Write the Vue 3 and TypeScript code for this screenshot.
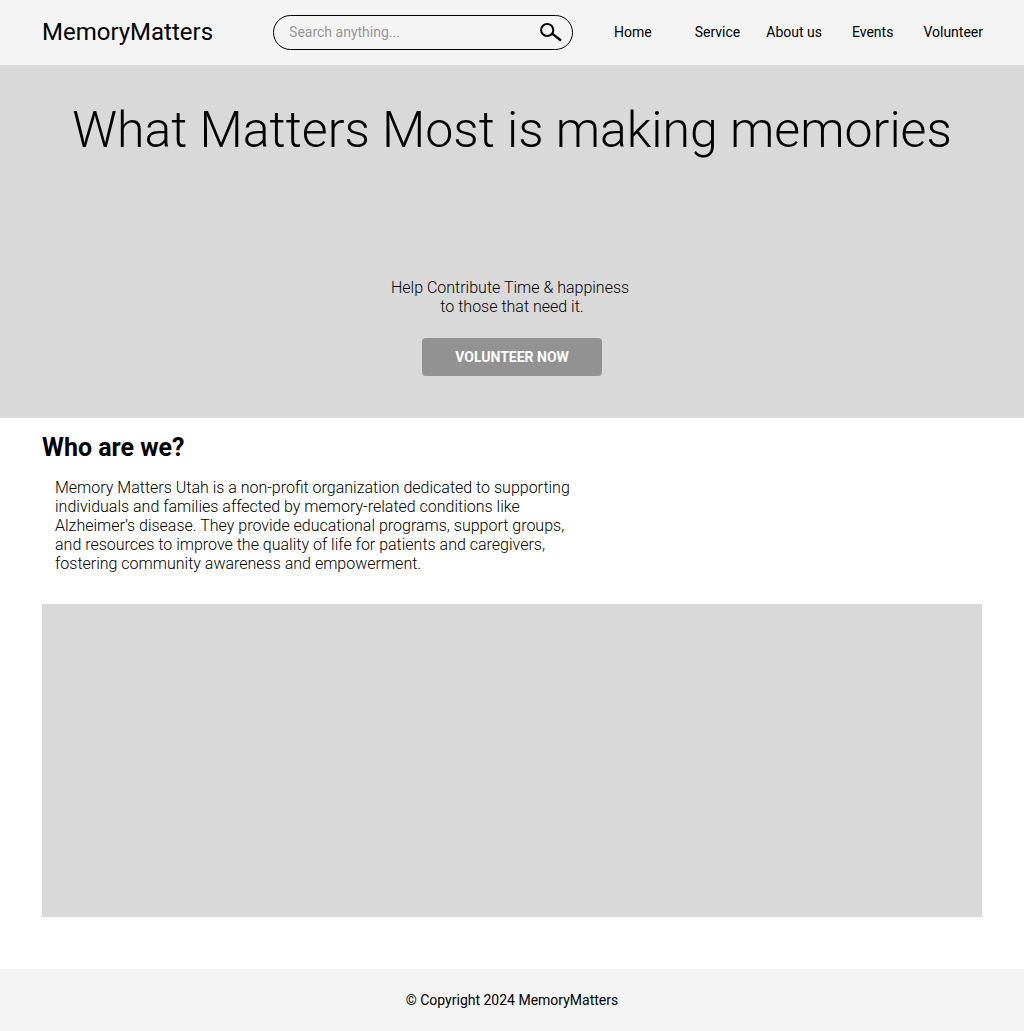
<script setup lang="ts">
import { ref } from 'vue'

interface NavItem {
  label: string
  slot: string
}

const query = ref<string>('')
const navItems: NavItem[] = [
  { label: 'Home', slot: 'home' },
  { label: 'Service', slot: 'service' },
  { label: 'About us', slot: 'about' },
  { label: 'Events', slot: 'events' },
  { label: 'Volunteer', slot: 'volunteer' },
]
</script>

<template>
  <div class="page">
    <header class="topbar">
      <a class="brand" href="#">MemoryMatters</a>
      <form class="search" role="search" @submit.prevent>
        <input v-model="query" type="search" aria-label="Search" placeholder="Search anything..." />
        <button type="submit" aria-label="Submit search">
          <svg viewBox="0 0 22 20" width="22" height="20" fill="none" stroke="#000" stroke-width="2">
            <circle cx="7.2" cy="8" r="6.1" />
            <path d="M11.6 11.6L13.2 12.4L21 18.5" stroke-width="2.3" />
          </svg>
        </button>
      </form>
      <nav class="nav" aria-label="Main">
        <a v-for="item in navItems" :key="item.slot" :class="item.slot" href="#">{{ item.label }}</a>
      </nav>
    </header>

    <main>
      <section class="hero">
        <h1>What Matters Most is making memories</h1>
        <div class="call">
          <p>Help Contribute Time &amp; happiness&nbsp;<br />to those that need it.</p>
          <button type="button" class="cta">VOLUNTEER NOW</button>
        </div>
      </section>

      <section class="about-section">
        <h2>Who are we?</h2>
        <p>
          Memory Matters Utah is a non-profit organization dedicated to supporting individuals and
          families affected by memory-related conditions like Alzheimer’s disease. They provide
          educational programs, support groups, and resources to improve the quality of life for
          patients and caregivers, fostering community awareness and empowerment.
        </p>
        <div class="banner"></div>
      </section>
    </main>

    <footer>© Copyright 2024 MemoryMatters</footer>
  </div>
</template>

<style>
body {
  margin: 0;
  background: #fff;
}
</style>

<style scoped>
.page {
  min-height: 100vh;
  display: flex;
  flex-direction: column;
  color: #000;
  font-family: Roboto, sans-serif;
  font-size: 16px;
  line-height: 19px;
}

.page *,
.page {
  box-sizing: border-box;
}

main {
  flex: 1;
}

.topbar {
  display: flex;
  align-items: center;
  height: 65px;
  padding: 0 41px 1px 42px;
  background: #f4f4f4;
}

.brand {
  font-size: 24px;
  line-height: 28px;
  color: inherit;
  text-decoration: none;
}

.search {
  display: flex;
  align-items: center;
  width: 300px;
  height: 35px;
  margin-left: 60px;
  padding: 0 10px 0 15px;
  border: 1px solid #000;
  border-radius: 18px;
}

.search input {
  flex: 1;
  min-width: 0;
  padding: 0;
  border: 0;
  outline: 0;
  background: none;
  appearance: none;
  font: 14px/16px Roboto, sans-serif;
}

.search input::placeholder {
  color: #979797;
  opacity: 1;
}

.search button {
  display: flex;
  padding: 0;
  border: 0;
  background: none;
}

.nav {
  display: flex;
  margin-left: auto;
  font-size: 14px;
  line-height: 16px;
}

.nav a {
  color: inherit;
  text-decoration: none;
  white-space: nowrap;
}

.nav .service {
  margin-left: 43px;
}

.nav .about {
  margin-left: 26px;
}

.nav .events,
.nav .volunteer {
  margin-left: 30px;
}

.hero {
  display: flex;
  flex-direction: column;
  align-items: center;
  justify-content: space-between;
  min-height: 353px;
  padding: 36px 42px 42px;
  background: #d9d9d9;
  text-align: center;
}

h1 {
  margin: 0;
  font-size: 50px;
  line-height: 59px;
  font-weight: 300;
}

.call {
  display: flex;
  flex-direction: column;
  align-items: center;
  gap: 22px;
}

p {
  margin: 0;
  font-weight: 300;
}

.cta {
  width: 180px;
  height: 38px;
  border: 0;
  border-radius: 4px;
  background: #929292;
  color: #fff;
  font: 700 14px/16px Roboto, sans-serif;
}

.about-section {
  padding: 15px 42px 52px;
}

h2 {
  margin: 0;
  font-size: 25px;
  line-height: 29px;
  font-weight: 700;
}

.about-section p {
  max-width: 533px;
  margin-top: 16px;
  padding-left: 13px;
}

.banner {
  height: 313px;
  margin-top: 31px;
  background: #d9d9d9;
}

footer {
  padding: 23px 42px;
  background: #f4f4f4;
  text-align: center;
  font-size: 14px;
  line-height: 16px;
}
</style>
